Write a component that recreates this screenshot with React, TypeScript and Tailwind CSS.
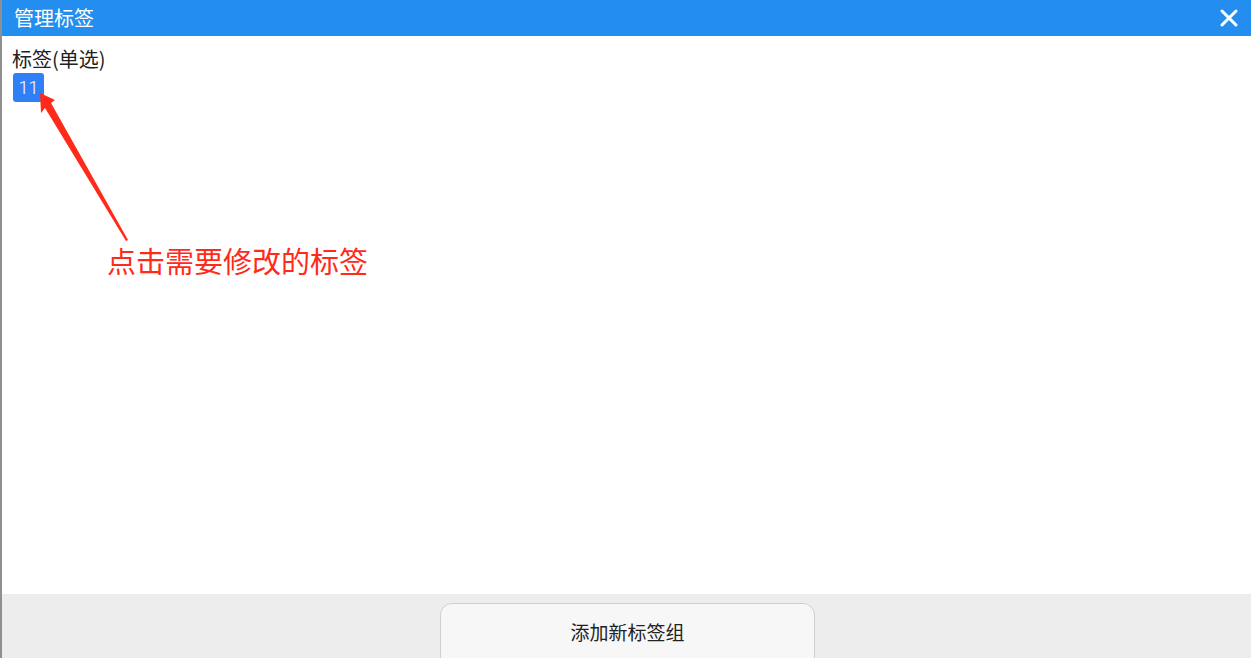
import { X } from 'lucide-react';

const cjk = { fontFamily: '"Noto Sans CJK SC", "Noto Sans", sans-serif' };

export default function App() {
  return (
    <div className="w-[1251px] h-[658px] flex flex-col overflow-hidden bg-white border-l-2 border-[#8f8f8f]" style={cjk}>
      <div className="h-[36px] bg-[#238ef0] flex items-center justify-between pl-[12px] pr-[8px] shrink-0">
        <span className="text-white text-[20px] leading-none">管理标签</span>
        <X className="w-[28px] h-[28px] text-white" strokeWidth={2.6} />
      </div>

      <div className="relative flex-1 px-[10px] pt-[10px]">
        <div className="text-[20px] leading-[26px] text-[#222]">标签(单选)</div>
        <div className="flex pt-[1px]">
          <span className="ml-[1px] w-[31px] h-[29px] rounded-[3px] bg-[#2f80f7] text-white text-[18px] font-light flex items-center justify-center leading-none" style={{ fontFamily: 'Roboto, sans-serif' }}>
            11
          </span>
        </div>

        <svg className="absolute left-0 top-0 pointer-events-none" width="400" height="300" viewBox="0 0 400 300">
          <polygon points="38,57 53,64 49,67 126,204 124,205 43,72 39,77" fill="#ff2a1a" />
        </svg>
        <div className="absolute left-[105px] top-[210px] text-[29px] leading-none text-[#ff2a1a]">
          点击需要修改的标签
        </div>
      </div>

      <div className="h-[64px] bg-[#ededed] shrink-0 flex justify-center pt-[9px] pl-[2px]">
        <button className="w-[375px] h-[70px] bg-[#f7f7f7] border border-[#cfcfcf] rounded-[12px] text-[19px] text-[#222] flex items-start justify-center pt-[14px]">
          添加新标签组
        </button>
      </div>
    </div>
  );
}
